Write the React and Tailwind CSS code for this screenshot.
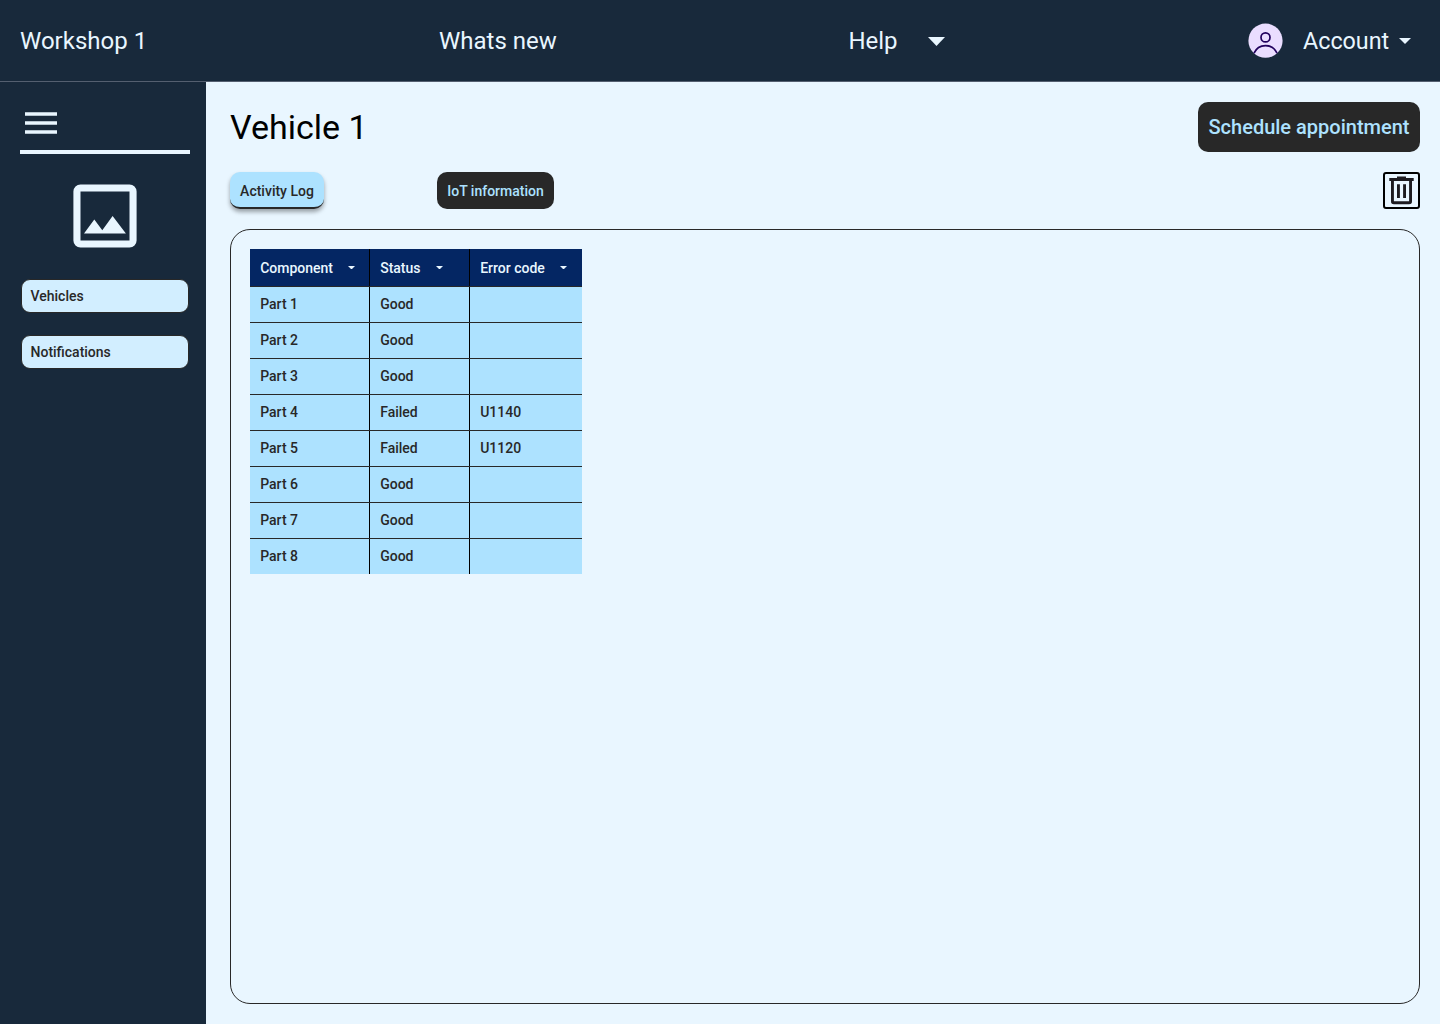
const rows = [
  ["Part 1", "Good", ""],
  ["Part 2", "Good", ""],
  ["Part 3", "Good", ""],
  ["Part 4", "Failed", "U1140"],
  ["Part 5", "Failed", "U1120"],
  ["Part 6", "Good", ""],
  ["Part 7", "Good", ""],
  ["Part 8", "Good", ""],
];

const columns = ["Component", "Status", "Error code"];

function Caret({ className }) {
  return (
    <svg className={className} viewBox="0 0 10 5" preserveAspectRatio="none" fill="currentColor">
      <path d="M0 0h10L5 5z" />
    </svg>
  );
}

function Header() {
  return (
    <header className="flex h-[82px] shrink-0 items-center border-b border-[#545f70] bg-[#18293b] pl-5 text-2xl text-[#e9f6ff]">
      <span className="w-[419px]">Workshop 1</span>
      <span className="w-[409px]">Whats new</span>
      <span className="flex w-[400px] items-center">
        <span className="w-20 pl-[0.4px]">Help</span>
        <Caret className="mt-px h-[9px] w-[17px]" />
      </span>
      <svg className="h-[35px] w-[35px]" viewBox="0 0 35 35" fill="none">
        <circle cx="17.5" cy="17.7" r="17.1" fill="#eaddff" />
        <circle cx="17.5" cy="14.4" r="4.5" stroke="#21005d" strokeWidth="1.7" />
        <path d="M6 30.2C8.1 25.4 12.300 22.600 17.500 22.600S26.900 25.400 29 30.200" stroke="#21005d" strokeWidth="1.7" />
      </svg>
      <span className="ml-5 w-24 text-[23.3px] leading-8">Account</span>
      <Caret className="mt-px h-1.5 w-3" />
    </header>
  );
}

function Sidebar() {
  return (
    <aside className="flex w-[206px] shrink-0 flex-col bg-[#18293b] px-5 pt-[30px]">
      <svg className="ml-[5px] h-[22px] w-8" viewBox="0 0 32 22" fill="#e9f6ff">
        <path d="M0 .2h32v3.600H0zM0 9.200h32v3.600H0zM0 18.200h32v3.600H0z" />
      </svg>
      <div className="mt-4 h-1 w-[170px] bg-[#e9f6ff]" />
      <svg className="mt-[30px] ml-[53px] h-16 w-16" viewBox="0 0 64 64" fill="#e9f6ff">
        <path fillRule="evenodd" d="M7.500.4h49a7.100 7.100 0 0 1 7.100 7.100v49a7.100 7.100 0 0 1-7.100 7.100h-49A7.100 7.100 0 0 1 .4 56.500v-49A7.100 7.100 0 0 1 7.500.4zM7.500 7.500v49.100h49V7.500z" />
        <path d="M11 49.500 21.300 35.500 29.300 46.200 39.600 32 52.900 49.500z" />
      </svg>
      {["Vehicles", "Notifications"].map((label) => (
        <button
          key={label}
          className="mt-[31px] -mb-[9px] ml-px flex h-[34px] w-[168px] shrink-0 items-center rounded-[9px] border border-[#282828] bg-[#d2eeff] pl-[8.5px] text-sm font-medium text-[#282828]"
        >
          {label}
        </button>
      ))}
    </aside>
  );
}

function StatusTable() {
  return (
    <div className="w-[332px] text-sm font-medium">
      <div className="grid h-[38px] grid-cols-[120px_100px_112px] border-b border-[#282828] bg-[#042663] text-[#e9f6ff]">
        {columns.map((name) => (
          <div key={name} className="flex items-center border-r border-black pl-[10.2px] last:border-r-0">
            {name}
            <Caret className="ml-[15px] h-[3.5px] w-[7px]" />
          </div>
        ))}
      </div>
      {rows.map((row) => (
        <div
          key={row[0]}
          className="grid h-9 grid-cols-[120px_100px_112px] border-b border-[#282828] bg-[#ade2ff] text-[#282828] last:h-[35px] last:border-b-0"
        >
          {row.map((cell, i) => (
            <div key={i} className="flex items-center border-r border-black pb-0.5 pl-[10.2px] last:border-r-0">
              {cell}
            </div>
          ))}
        </div>
      ))}
    </div>
  );
}

export default function App() {
  return (
    <div className="flex h-[1024px] w-[1440px] flex-col overflow-hidden bg-[#e9f6ff] font-['Roboto',sans-serif]">
      <Header />
      <div className="flex min-h-0 flex-1">
        <Sidebar />
        <main className="flex flex-1 flex-col pt-5 pr-5 pb-5 pl-6">
          <div className="flex h-[50px] items-center justify-between">
            <h1 className="text-[34px] leading-[50px] text-black">Vehicle 1</h1>
            <button className="h-[50px] w-[222px] rounded-[10px] bg-[#282828] text-xl font-medium whitespace-nowrap text-[#ade2ff]">
              Schedule appointment
            </button>
          </div>
          <div className="mt-5 flex h-[37px] items-start">
            <button className="h-[37px] w-[94px] rounded-[10px] border-b-2 border-[#282828] bg-[#ade2ff] pt-0.5 text-sm font-medium whitespace-nowrap text-[#282828] shadow-[0_3px_4px_rgba(0,0,0,0.35)]">
              Activity Log
            </button>
            <button className="ml-[113px] h-[37px] w-[117px] rounded-[10px] bg-[#282828] text-sm font-medium whitespace-nowrap text-[#ade2ff]">
              IoT information
            </button>
            <button className="ml-auto flex h-[37px] w-[37px] items-center justify-center rounded-[3px] border-2 border-black">
              <svg className="h-[29px] w-[25px]" viewBox="0 0 25 29" fill="#1d1b20">
                <path fillRule="evenodd" d="M8 .6h9v1.500h7.700v3H23V25a3 3 0 0 1-3 3.200H5A3 3 0 0 1 2 25V5.100H.3v-3H8zM4.900 5.100v20.100h15.200V5.100z" />
                <path d="M8 8.300h2.900v13.800H8zM14.100 8.300H17v13.800h-2.900z" />
              </svg>
            </button>
          </div>
          <section className="mt-5 flex-1 rounded-[20px] border border-[#282828] pt-[19px] pl-[19px]">
            <StatusTable />
          </section>
        </main>
      </div>
    </div>
  );
}
